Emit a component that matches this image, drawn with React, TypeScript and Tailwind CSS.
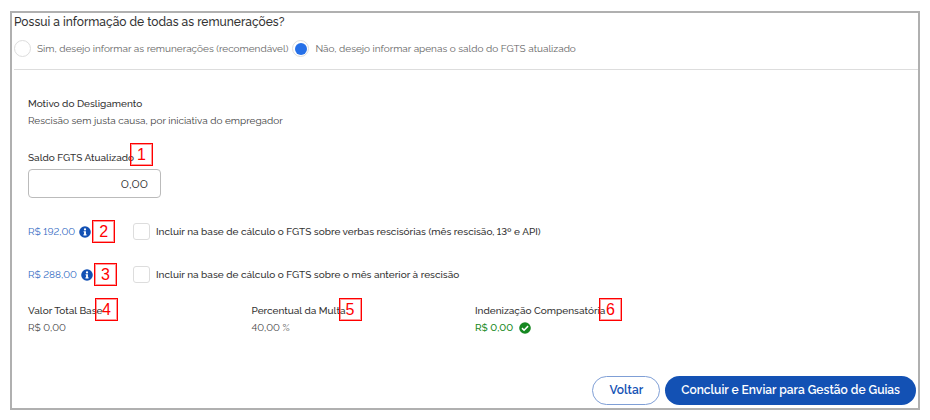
import React, { useState } from 'react';
import clsx from 'clsx';

const InfoIcon = () => (
  <svg viewBox="0 0 512 512" className="size-3" aria-hidden="true">
    <circle cx="256" cy="256" r="248" fill="#1351b4" />
    <circle cx="256" cy="148" r="48" fill="#fff" />
    <path
      d="M196 220h100v134h26v50H190v-50h26v-84h-20z"
      fill="#fff"
    />
  </svg>
);

const CheckIcon = () => (
  <svg viewBox="0 0 512 512" className="size-3" aria-hidden="true">
    <circle cx="256" cy="256" r="248" fill="#168821" />
    <path d="M128 262l88 88 172-172" fill="none" stroke="#fff" strokeWidth="66" />
  </svg>
);

interface MarkerProps {
  value: number;
  className?: string;
}

const Marker: React.FC<MarkerProps> = ({ value, className }) => (
  <span
    className={clsx(
      'flex size-[23px] items-center justify-center border border-[#ff0000] outline outline-[#ff0000]/40 -outline-offset-2 font-["Liberation_Sans",Arial,sans-serif] text-base leading-none font-normal text-[#ff0000]',
      className
    )}
  >
    {value}
  </span>
);

interface RadioProps {
  label: string;
  checked: boolean;
  onChange: () => void;
}

const Radio: React.FC<RadioProps> = ({ label, checked, onChange }) => (
  <label className="flex items-center gap-[6px] text-[#666666]">
    <input
      type="radio"
      name="remuneracoes"
      checked={checked}
      onChange={onChange}
      className="grid size-[17px] appearance-none place-items-center rounded-full border border-[#dddddd] bg-white checked:before:size-3 checked:before:rounded-full checked:before:bg-[#2670e8] checked:before:content-['']"
    />
    {label}
  </label>
);

interface BaseRowProps {
  amount: string;
  marker: number;
  label: string;
}

const BaseRow: React.FC<BaseRowProps> = ({ amount, marker, label }) => (
  <div className="flex h-[23px] items-center">
    <div className="flex w-[105px] items-center">
      <span className="mr-1 text-[#2f68c2]">{amount}</span>
      <InfoIcon />
      <Marker value={marker} className="ml-[1px]" />
    </div>
    <label className="flex items-center gap-[6px] font-medium">
      <input
        type="checkbox"
        className="size-[17px] appearance-none rounded-[3px] border border-[#dddddd] bg-white checked:bg-[#2670e8]"
      />
      {label}
    </label>
  </div>
);

export default function App() {
  const [informar, setInformar] = useState(false);
  const [saldo, setSaldo] = useState('0,00');

  return (
    <div className='bg-white px-[10px] py-[11px] font-[Raleway,Lato,"Open_Sans",sans-serif] text-[10px] leading-[17px] text-[#333333] lining-nums'>
      <main className="border-2 border-[#b0b0b0] pt-[1px] pb-[3px] pl-[2px]">
        <fieldset className="border-b border-[#dddddd] pb-3">
          <legend className="text-[12px] font-medium">Possui a informação de todas as remunerações?</legend>
          <div className="flex gap-1 pt-[9px]">
            <Radio
              label="Sim, desejo informar as remunerações (recomendável)"
              checked={informar}
              onChange={() => setInformar(true)}
            />
            <Radio
              label="Não, desejo informar apenas o saldo do FGTS atualizado"
              checked={!informar}
              onChange={() => setInformar(false)}
            />
          </div>
        </fieldset>

        <div className="pt-[25px] pl-[14px]">
          <p className="font-medium">Motivo do Desligamento</p>
          <p className="text-[#444444]">Rescisão sem justa causa, por iniciativa do empregador</p>

          <div className="relative mt-5">
            <label htmlFor="saldo" className="block font-medium">Saldo FGTS Atualizado</label>
            <Marker value={1} className="absolute -top-[6px] left-[102px]" />
            <input
              id="saldo"
              value={saldo}
              onChange={(e) => setSaldo(e.target.value)}
              className="mt-[3px] block h-[29px] w-[133px] rounded-[4px] border border-[#bbbbbb] px-3 text-right text-[12px]"
            />
          </div>

          <div className="mt-[22px] space-y-5">
            <BaseRow
              amount="R$ 192,00"
              marker={2}
              label="Incluir na base de cálculo o FGTS sobre verbas rescisórias (mês rescisão, 13º e API)"
            />
            <BaseRow
              amount="R$ 288,00"
              marker={3}
              label="Incluir na base de cálculo o FGTS sobre o mês anterior à rescisão"
            />
          </div>

          <dl className="mt-4 grid grid-cols-4 gap-x-1">
            <div className="relative">
              <dt className="font-medium">Valor Total Base</dt>
              <dd className="text-[#444444]">R$ 0,00</dd>
              <Marker value={4} className="absolute -top-1 left-[67px]" />
            </div>
            <div className="relative">
              <dt className="font-medium">Percentual da Multa</dt>
              <dd className="text-[#444444]">40,00 %</dd>
              <Marker value={5} className="absolute -top-1 left-[87px]" />
            </div>
            <div className="relative">
              <dt className="font-medium">Indenização Compensatória</dt>
              <dd className="flex items-center gap-[6px] font-medium text-[#168821]">
                R$ 0,00
                <CheckIcon />
              </dd>
              <Marker value={6} className="absolute -top-1 left-[124px]" />
            </div>
          </dl>
        </div>

        <div className="mt-10 flex justify-end gap-[5px] pr-[2px] text-[12px] font-semibold">
          <button type="button" className="h-[29px] rounded-full border border-[#7f9fd6] px-4 text-[#1351b4]">
            Voltar
          </button>
          <button type="button" className="h-[29px] rounded-full bg-[#1351b4] px-4 text-white">
            Concluir e Enviar para Gestão de Guias
          </button>
        </div>
      </main>
    </div>
  );
}
